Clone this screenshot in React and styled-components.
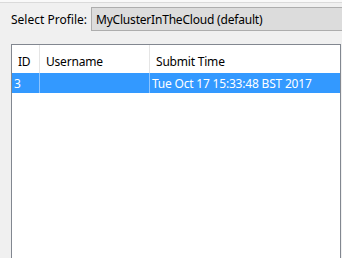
import React from "react";
import styled, { createGlobalStyle } from "styled-components";

const GlobalStyle = createGlobalStyle`
  html, body {
    margin: 0;
    padding: 0;
    width: 342px;
    height: 258px;
    overflow: hidden;
    background: #f0f0f0;
    font-family: "Noto Sans", "Open Sans", sans-serif;
    font-size: 12px;
    color: #000;
  }
`;

const Window = styled.div`
  width: 342px;
  height: 258px;
  display: flex;
  flex-direction: column;
  overflow: hidden;
`;

const TopEdge = styled.div`
  height: 2px;
  background: #f9f9f9;
  border-bottom: 1px solid #dadada;
`;

const ProfileBar = styled.div`
  display: flex;
  align-items: center;
  padding: 4px 0 0 11px;
  height: 24px;
  gap: 3px;
`;

const Label = styled.span`
  white-space: nowrap;
`;

const Combo = styled.div`
  flex: 0 0 auto;
  width: 280px;
  height: 22px;
  margin-left: 1px;
  background: #dcdcdc;
  border: 1px solid #adadad;
  display: flex;
  align-items: center;
  padding-left: 4px;
  white-space: nowrap;
  letter-spacing: -0.2px;
`;

const Table = styled.div`
  margin: 13px 1px 0 11px;
  flex: 1;
  background: #fff;
  border: 1px solid #828790;
  border-bottom: none;
  display: flex;
  flex-direction: column;
`;

const Row = styled.div`
  display: grid;
  grid-template-columns: 28px 110px 1fr;
  height: ${(p) => (p.header ? "28px" : "20px")};
  background: ${(p) => (p.selected ? "#3399ff" : "#fff")};
  color: ${(p) => (p.selected ? "#fff" : "#000")};
`;

const Cell = styled.div`
  display: flex;
  align-items: center;
  padding-left: ${(p) => (p.header ? "6px" : "2px")};
  padding-top: ${(p) => (p.header ? "4px" : "0")};
  border-right: 1px solid ${(p) => (p.selected ? "#8cc4ff" : "#e5e5e5")};
  white-space: nowrap;
  overflow: hidden;
  letter-spacing: -0.2px;
  &:last-child {
    border-right: none;
  }
`;

const columns = ["ID", "Username", "Submit Time"];
const jobs = [{ id: "3", user: "", time: "Tue Oct 17 15:33:48 BST 2017" }];

export default function App() {
  return (
    <Window>
      <GlobalStyle />
      <TopEdge />
      <ProfileBar>
        <Label>Select Profile:</Label>
        <Combo>MyClusterInTheCloud (default)</Combo>
      </ProfileBar>
      <Table>
        <Row header>
          {columns.map((c) => (
            <Cell header key={c}>
              {c}
            </Cell>
          ))}
        </Row>
        {jobs.map((j) => (
          <Row selected key={j.id}>
            <Cell selected>{j.id}</Cell>
            <Cell selected>{j.user}</Cell>
            <Cell selected>{j.time}</Cell>
          </Row>
        ))}
      </Table>
    </Window>
  );
}
